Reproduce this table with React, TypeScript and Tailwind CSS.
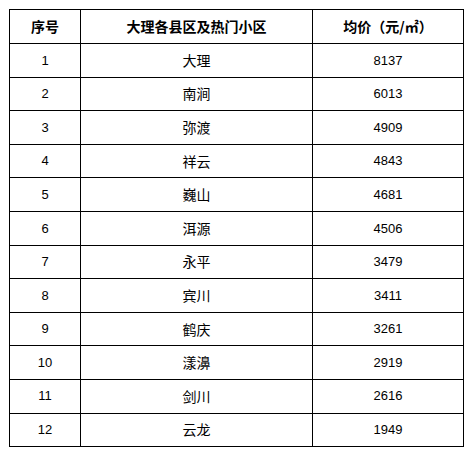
const rows: [number, string, number][] = [
  [1, "大理", 8137],
  [2, "南涧", 6013],
  [3, "弥渡", 4909],
  [4, "祥云", 4843],
  [5, "巍山", 4681],
  [6, "洱源", 4506],
  [7, "永平", 3479],
  [8, "宾川", 3411],
  [9, "鹤庆", 3261],
  [10, "漾濞", 2919],
  [11, "剑川", 2616],
  [12, "云龙", 1949],
];

export default function App() {
  return (
    <div className="w-[473px] h-[458px] bg-white pt-[9px] pl-[9px]">
      <table className="border-collapse w-[454px] table-fixed text-black">
        <colgroup>
          <col className="w-[71px]" />
          <col className="w-[232px]" />
          <col className="w-[151px]" />
        </colgroup>
        <thead>
          <tr className="h-[34px] font-['Noto_Sans_CJK_SC',sans-serif] text-[14px] font-bold">
            <th className="border border-black text-center">序号</th>
            <th className="border border-black text-center">大理各县区及热门小区</th>
            <th className="border border-black text-center">均价（元/㎡）</th>
          </tr>
        </thead>
        <tbody>
          {rows.map(([no, name, price]) => (
            <tr key={no} className="h-[33.6px]">
              <td className="border border-black text-center font-['Liberation_Sans',sans-serif] text-[13px]">
                {no}
              </td>
              <td className="border border-black text-center font-['Noto_Sans_CJK_SC',sans-serif] text-[14px]">
                {name}
              </td>
              <td className="border border-black text-center font-['Liberation_Sans',sans-serif] text-[13px]">
                {price}
              </td>
            </tr>
          ))}
        </tbody>
      </table>
    </div>
  );
}
